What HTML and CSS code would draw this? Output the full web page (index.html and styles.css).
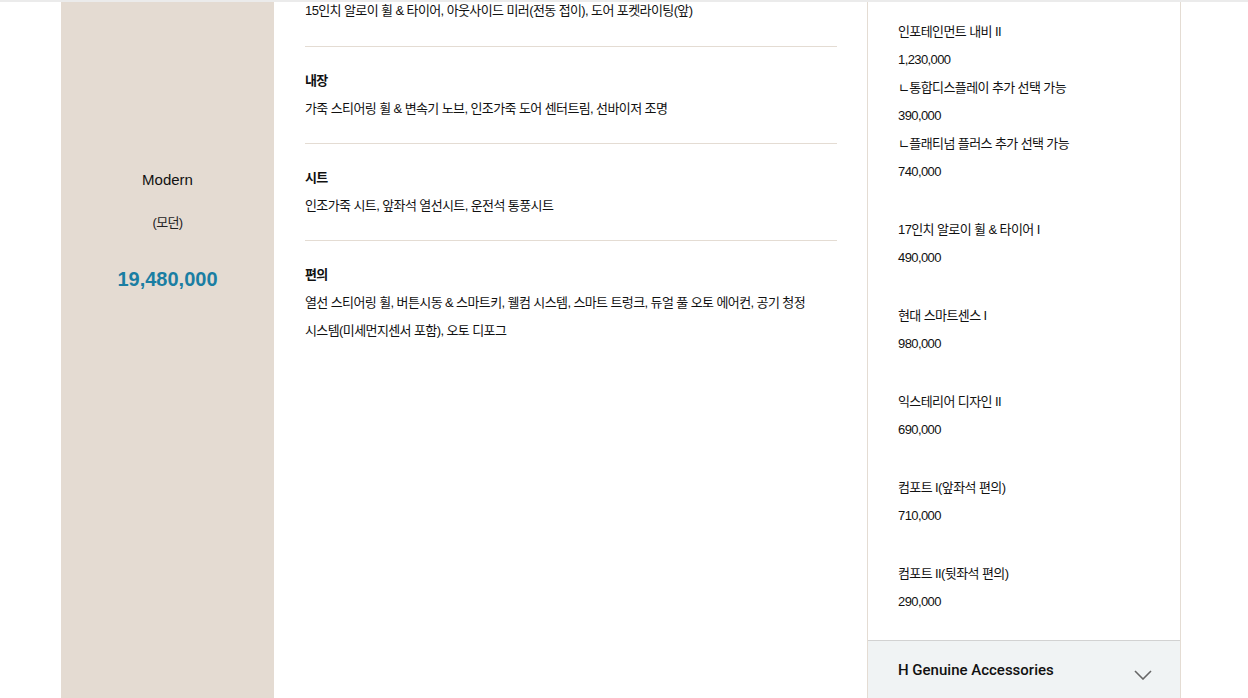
FILE: index.html
```html
<!DOCTYPE html>
<html lang="ko">
<head>
<meta charset="utf-8">
<link rel="stylesheet" href="styles.css">
</head>
<body>
<div class="page">
  <div class="row">
    <div class="trim">
      <div class="trim-name">Modern</div>
      <div class="trim-ko">(모던)</div>
      <div class="trim-price">19,480,000</div>
    </div>
    <div class="specs">
      <div class="spec spec-first">
        <p class="spec-text">15인치 알로이 휠 &amp; 타이어, 아웃사이드 미러(전동 접이), 도어 포켓라이팅(앞)</p>
      </div>
      <div class="spec">
        <h4 class="spec-title">내장</h4>
        <p class="spec-text">가죽 스티어링 휠 &amp; 변속기 노브, 인조가죽 도어 센터트림, 선바이저 조명</p>
      </div>
      <div class="spec">
        <h4 class="spec-title">시트</h4>
        <p class="spec-text">인조가죽 시트, 앞좌석 열선시트, 운전석 통풍시트</p>
      </div>
      <div class="spec spec-last">
        <h4 class="spec-title">편의</h4>
        <p class="spec-text">열선 스티어링 휠, 버튼시동 &amp; 스마트키, 웰컴 시스템, 스마트 트렁크, 듀얼 풀 오토 에어컨, 공기 청정 <span class="nw">시스템(미세먼지센서</span> 포함), 오토 디포그</p>
      </div>
    </div>
    <div class="options">
      <div class="option-list">
        <div class="option">
          <p>인포테인먼트 내비 II</p>
          <p>1,230,000</p>
          <p>ㄴ통합디스플레이 추가 선택 가능</p>
          <p>390,000</p>
          <p>ㄴ플래티넘 플러스 추가 선택 가능</p>
          <p>740,000</p>
        </div>
        <div class="option">
          <p>17인치 알로이 휠 &amp; 타이어 I</p>
          <p>490,000</p>
        </div>
        <div class="option">
          <p>현대 스마트센스 I</p>
          <p>980,000</p>
        </div>
        <div class="option">
          <p>익스테리어 디자인 II</p>
          <p>690,000</p>
        </div>
        <div class="option">
          <p>컴포트 I(앞좌석 편의)</p>
          <p>710,000</p>
        </div>
        <div class="option">
          <p>컴포트 II(뒷좌석 편의)</p>
          <p>290,000</p>
        </div>
      </div>
      <div class="acc-head">
        <span class="acc-title">H Genuine Accessories</span>
        <svg class="chev" width="18" height="10" viewBox="0 0 18 10"><path d="M1 1 L9 9 L17 1" fill="none" stroke="#666" stroke-width="1.6"/></svg>
      </div>
    </div>
  </div>
</div>
</body>
</html>
```

FILE: styles.css
```css
* { box-sizing: border-box; }
html, body { margin: 0; padding: 0; background: #fff; }
body {
  font-family: "Liberation Sans", "Noto Sans CJK KR", sans-serif;
  color: #111;
  overflow: hidden;
  height: 698px;
}
.page {
  border-top: 2px solid #ebebeb;
  padding-left: 61px;
}
.row {
  display: flex;
  align-items: stretch;
  min-height: 696px;
}
.trim {
  width: 213px;
  background: #e4dbd2;
  display: flex;
  flex-direction: column;
  align-items: center;
  padding-top: 168px;
}
.trim-name {
  font-size: 15px;
  line-height: 20px;
  color: #111;
}
.trim-ko {
  font-size: 13px;
  line-height: 20px;
  margin-top: 23px;
  color: #222;
  letter-spacing: -0.6px;
}
.trim-price {
  font-size: 20px;
  font-weight: bold;
  line-height: 24px;
  margin-top: 34px;
  color: #1a7ea3;
}
.specs {
  width: 532px;
  margin-left: 31px;
}
.spec {
  border-bottom: 1px solid #e4dcd3;
  padding: 20px 0 20px;
}
.spec-first { padding-top: 0; margin-top: -5px; padding-bottom: 21px; }
.spec-last { border-bottom: none; }
.spec-title {
  margin: 0;
  font-size: 13px;
  font-weight: bold;
  line-height: 28px;
  color: #111;
  letter-spacing: -0.6px;
}
.spec-text {
  margin: 0;
  font-size: 13px;
  line-height: 28px;
  color: #111;
  letter-spacing: -0.6px;
  word-break: keep-all;
}
.nw { white-space: nowrap; }
.options {
  width: 314px;
  margin-left: 30px;
  border-left: 1px solid #e4dcd3;
  border-right: 1px solid #e4dcd3;
  display: flex;
  flex-direction: column;
}
.option-list {
  padding: 16px 30px 24px;
}
.option + .option { margin-top: 30px; }
.option p {
  margin: 0;
  font-size: 13px;
  line-height: 28px;
  color: #111;
  letter-spacing: -0.6px;
}
.acc-head {
  border-top: 1px solid #d2d2d2;
  background: #f0f3f4;
  height: 60px;
  padding: 0 28px 0 30px;
  display: flex;
  align-items: center;
  justify-content: space-between;
}
.acc-title {
  font-family: Roboto, "Liberation Sans", sans-serif;
  font-size: 15px;
  font-weight: 500;
  color: #111;
  margin-top: -1px;
}
.chev { margin-top: 8px; }
```
